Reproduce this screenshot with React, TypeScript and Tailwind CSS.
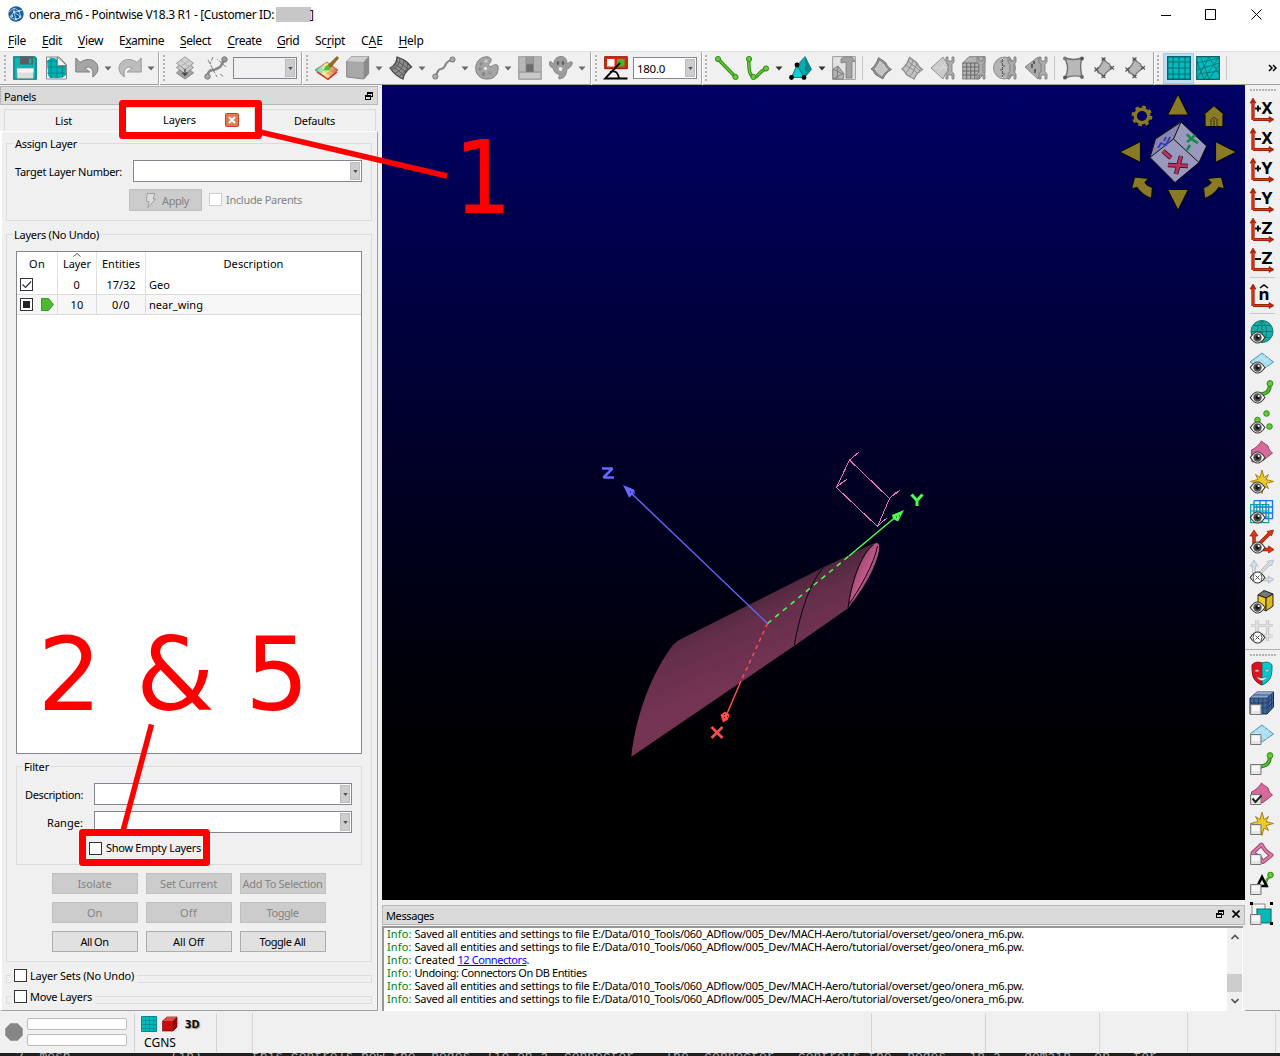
import React, { useLayoutEffect, useRef, useState } from "react";

type Kids = { children?: React.ReactNode };

/* Text that spreads its letters so that the run fills a given width. */
function Fit({ w, className = "", children }: { w: number; className?: string } & Kids) {
  const ref = useRef<HTMLSpanElement>(null);
  const [ls, setLs] = useState(0);
  useLayoutEffect(() => {
    const el = ref.current;
    if (!el) return;
    const n = (el.textContent || "").length;
    const natural = el.getBoundingClientRect().width - ls * n;
    setLs((w - natural) / n);
  }, [w]);
  return (
    <span ref={ref} className={"inline-block whitespace-pre " + className} style={{ letterSpacing: ls + "px" }}>
      {children}
    </span>
  );
}

function G({ c = "", children }: { c?: string } & Kids) {
  return (
    <svg viewBox="0 0 24 24" className={"block h-6 w-6 shrink-0 overflow-visible " + c} fill="none">
      {children}
    </svg>
  );
}

const Drop = ({ c = "ml-[5px]", fill = "#68686e" }: { c?: string; fill?: string }) => (
  <svg viewBox="0 0 8 5" className={"block h-[5px] w-2 shrink-0 " + c}>
    <path d="M0.5 0.5h7L4 4.5z" fill={fill} />
  </svg>
);

const Sep = ({ c = "" }: { c?: string }) => (
  <div className={"h-[33px] w-[2px] shrink-0 border-l border-[#a6a6a6] bg-white " + c} />
);
const Thin = ({ c = "" }: { c?: string }) => <div className={"h-6 w-px shrink-0 bg-[#c8c8c8] " + c} />;
const Grip = ({ c = "" }: { c?: string }) => (
  <div className={"flex h-[26px] w-[3px] shrink-0 flex-col justify-between " + c}>
    {Array.from({ length: 7 }, (_, i) => (
      <i key={i} className="block h-[2px] w-[2px] bg-[#b4b4b4]" />
    ))}
  </div>
);

function Combo({ c = "", children }: { c?: string } & Kids) {
  return (
    <div className={"flex h-[22px] shrink-0 items-center justify-between border border-[#828790] pr-px " + c}>
      <span className="pt-px pl-[3px]">{children}</span>
      <span className="flex h-[18px] w-[10px] items-center justify-center border border-[#bcbcbc] bg-[#cdcdcd]">
        <svg viewBox="0 0 6 4" className="h-[3px] w-[5px]">
          <path d="M0 0h6L3 4z" fill="#505050" />
        </svg>
      </span>
    </div>
  );
}

/* ---------- toolbar drawings ---------- */
const dk = "#777";

const Wrench = () => (
  <g>
    <path d="M15 1h2v4h4V1h2v5l-2 2.500v7l2 2.500v5h-2v-4h-4v4h-2v-5l2-2.500v-7L15 6z" fill="#adadad" stroke="#777" strokeWidth=".8" />
  </g>
);

const GreenDot = ({ x, y, r = 2.6 }: { x: number; y: number; r?: number }) => (
  <circle cx={x} cy={y} r={r} fill="#63cb3b" stroke="#348a16" strokeWidth="1" />
);

function Toolbar() {
  return (
    <div className="flex h-[34px] w-full shrink-0 items-center border-t border-b border-t-[#e3e3e3] border-b-[#a0a0a0] bg-[#f0f0f0]">
      <Grip c="ml-1" />
      {/* save */}
      <G c="ml-[6px]">
        <path d="M.8.8h21l1.400 1.400V23.200H.8z" fill="#08b5b7" stroke="#037b7d" strokeWidth="1.300" />
        <path d="M7 .5h13v8H7z" fill="#5d5d5d" />
        <path d="M16 2.500h2.500v5H16z" fill="#08b5b7" />
        <path d="M4 12.500h16.500v10H4z" fill="#dedede" stroke="#7fa0a0" strokeWidth=".7" />
        <path d="M4 12.500h16.500v4H4z" fill="#f8f8f8" />
      </G>
      {/* page with grid */}
      <G c="ml-2">
        <path d="M1.500 1h12.500l7.500 7.500v14.500h-20z" fill="#fff" stroke="#888" />
        <path d="M2 5Q8-1 12 4v6h9v9Q17 23 9 22Q3 23 3 18z" fill="#08b0b2" />
        <path d="M2 5h10M2 11h18M2 17h18M6 1v21M12 1v21M17.500 9v13" stroke="#037375" strokeWidth=".6" />
        <path d="M12.500 1v8.500h9z" fill="#f5f5f5" stroke="#888" />
      </G>
      <G c="ml-[6px]">
        <path d="M.8 2v14h14l-5-4c5-2.500 9 0 8 9 5-3.500 6.500-9 4-13C18.500 2.500 11 2 5 6.500z" fill="#a5a5a5" stroke="#7e7e7e" />
      </G>
      <Drop />
      <G c="ml-[6px]">
        <path d="M23.200 2v14h-14l5-4c-5-2.500-9 0-8 9C1.200 17.500-.3 12 2.200 8 5.500 2.500 13 2 19 6.500z" fill="#bdbdbd" stroke="#9a9a9a" />
      </G>
      <Drop />
      <Sep c="ml-[3px]" />
      <Grip c="ml-[3px]" />
      {/* stacked layers */}
      <G c="ml-2">
        <path d="M11 9l8.500 8L11 23l-8.500-6z" fill="#a2a2a2" stroke="#888" />
        <path d="M11 5l8.500 6.500L11 18l-8.500-6.500z" fill="#c8c8c8" stroke="#8b8b8b" />
        <path d="M11 .8l8.500 6.400L11 13.500 2.500 7.200z" fill="#d0d0d0" stroke="#9a9a9a" />
        <path d="M6.500 4l8.500 6.500M15.500 4L7 10.500" stroke="#a5a5a5" strokeWidth=".7" />
        <path d="M11 13v6m-2.500-2.500l2.500 3 2.500-3" stroke="#444" strokeWidth="1.300" />
      </G>
      <G c="ml-[6px]">
        <path d="M3 20.500C5 12 9 15 12 13c4-2 5-1 8-10" stroke="#888" strokeWidth="2.600" />
        <path d="M4 4l9 17M22 11l-9-8M9 1L6 8M16 18l4 3" stroke="#777" strokeWidth=".9" strokeDasharray="4 1.500" />
        <circle cx="3.500" cy="20.500" r="2.700" fill="#aaa" stroke={dk} />
        <circle cx="20.500" cy="3.500" r="2.700" fill="#999" stroke={dk} />
      </G>
      <Combo c="ml-[5px] w-16 bg-[#f0f0f0]" />
      <Sep c="ml-1" />
      <Grip c="ml-[3px]" />
      {/* brush */}
      <G c="ml-[6px]">
        <defs>
          <linearGradient id="rb" x1="0" x2="1">
            <stop offset="0" stopColor="#21d3de" />
            <stop offset=".45" stopColor="#f9f7a1" />
            <stop offset="1" stopColor="#e84b38" />
          </linearGradient>
        </defs>
        <path d="M0 14L12 6l11 8-10 9z" fill="url(#rb)" stroke="#b05a4a" strokeWidth=".8" />
        <path d="M2 16l11 7.500L22 16" stroke="#db2020" strokeWidth="1.300" />
        <path d="M5 12l11 7M8 9.500l11 7M5 17l11-8M9 20l11-8" stroke="#a4905a" strokeWidth=".4" />
        <path d="M9 14c0-3 2-5 4.500-5L16 11c0 3-3 4-7 3z" fill="#55bd35" />
        <path d="M13.500 9L22 .5l1.500 1.500-7.500 9z" fill="#a26a13" stroke="#65420d" strokeWidth=".7" />
      </G>
      <G c="ml-[7px]">
        <path d="M.7 5l5-4.500h17v17l-5 5.500-17-2z" fill="#a8a8a8" stroke="#858585" />
        <path d="M.7 5l5-4.500h17L17.700 6z" fill="#cfcfcf" />
        <path d="M17.700 6l5-5.500v17l-5 5.500z" fill="#8b8b8b" />
      </G>
      <Drop />
      <G c="ml-[6px]">
        <path d="M1 12C5 10 8 7 8 1c7 2 10 5 14.500 10C18 14 15 17 14 23 9 21 5 18 1 12z" fill="#8c8c8c" stroke="#444" strokeWidth="1.300" />
        <path d="M3 13.500c5-2 8-6 8-11M6.500 17c5-2 8-6 8-12.500M10.500 20c4-3 8-6 8-12M5.500 8.500c4 1 9 6 12 8M7.500 5.500c5 2 9 5 12.500 8M4 11c4 2 8 6 11 8.500" stroke="#505050" strokeWidth=".8" />
      </G>
      <Drop />
      <G c="ml-[6px]">
        <path d="M4 20C7 9 10 16 13 10c1-4 3-5 7-6" stroke="#888" strokeWidth="2.200" />
        <circle cx="3.300" cy="20.500" r="2.600" fill="#aaa" stroke={dk} />
        <circle cx="20.500" cy="3.500" r="2.600" fill="#aaa" stroke={dk} />
      </G>
      <Drop />
      <G c="ml-[6px]">
        <path d="M8 1.500C12 0 15 1 16 3c1 4-4 5-2 7 3 2 6-4 9 0 1 7-3 13-10 13C5 23.500 0 18 .8 11 1.200 6 4 3 8 1.500z" fill="#a5a5a5" stroke="#808080" />
        <circle cx="6" cy="8" r="1.700" fill="#8a8a8a" /><circle cx="5" cy="13" r="1.700" fill="#8a8a8a" />
        <circle cx="8.500" cy="18" r="1.900" fill="#888" /><circle cx="15" cy="17" r="2" fill="#999" />
        <circle cx="10.500" cy="12.500" r="1.500" fill="#eee" /><circle cx="11" cy="5" r="1.700" fill="#ccc" />
      </G>
      <Drop />
      <G c="ml-[6px]">
        <path d="M.7.7h22.600v22.600H.7z" fill="#b8b8b8" stroke="#999" />
        <path d="M8 .7h7.500v7.500H8z" fill="#9a9a9a" /><path d="M15.500 .7h7.800V16h-7.800z" fill="#b4b4b4" /><path d="M8 8h7.500v8H8z" fill="#6c6c6c" />
        <path d="M15.500 .7V16M8 .7V16h15M8 8h7.500M.7 16H8" stroke="#888" strokeWidth=".8" />
        <path d="M2 17h20v5H2z" fill="#c9c9c9" />
      </G>
      {/* ghost */}
      <G c="ml-[7px]">
        <path d="M5 8c0-5 3-7.500 7-7.500S18 3 18 8c2-1 3-3 5-2 1 3-2 6-5 7-1 5-1 9-8 10-1-1 1-3 0-5-4 0-5-3-6-6-3-1-4-3-3.500-6C2 4.500 3 7 5 8z" fill="#9c9c9c" stroke="#888" />
        <ellipse cx="9" cy="7" rx="1.300" ry="2" fill="#5e5e5e" /><ellipse cx="14" cy="7" rx="1.300" ry="2" fill="#5e5e5e" />
        <circle cx="11.500" cy="13" r="2" fill="#eee" />
      </G>
      <Drop />
      <Sep c="ml-[4px]" />
      <Grip c="ml-[3px]" />
      <G c="ml-[6px]">
        <path d="M.7.7h22.600v12H.7z" fill="#d62c0d" stroke="#8e1703" />
        <path d="M3 3h7.500v7.500H3z" fill="#fff" /><path d="M13 3h7.500v7.500H13z" fill="#43b72c" />
        <path d="M16 7L1 22.500h22.500M6 16c6-2 8 1 9 6" stroke="#000" strokeWidth="1.800" />
      </G>
      <Combo c="ml-[5px] w-16 bg-white text-[11.5px] leading-[18px]">
        <Fit w={28}>180.0</Fit>
      </Combo>
      <Sep c="ml-1" />
      <Grip c="ml-[2px]" />
      <G c="ml-[7px]">
        <path d="M3 3l17.500 18" stroke="#348a16" strokeWidth="3.500" /><path d="M3 3l17.500 18" stroke="#5cc835" strokeWidth="1.600" />
        <GreenDot x={3} y={3} /><GreenDot x={20.500} y={21} />
      </G>
      <G c="ml-[7px]">
        <path d="M3 3c-1 16 3 18 6 18s5-7 11-8" stroke="#348a16" strokeWidth="3.500" /><path d="M3 3c-1 16 3 18 6 18s5-7 11-8" stroke="#5cc835" strokeWidth="1.600" />
        <GreenDot x={3} y={3} /><GreenDot x={20} y={12.500} /><GreenDot x={7.500} y={21} />
      </G>
      <Drop fill="#303035" />
      <G c="ml-[6px]">
        <path d="M16 .5L8 9.500 3 21h13l6.500-7.500z" fill="#07aaad" stroke="#037375" strokeWidth=".7" />
        <path d="M16 .5l6.500 13L16 21z" fill="#03898c" />
        <path d="M8 9L2.500 21.500H15z" fill="#0bd0d3" stroke="#036f70" strokeWidth=".8" />
        <circle cx="8" cy="9" r="2.400" fill="#000" /><circle cx="2.500" cy="21.500" r="2.400" fill="#000" /><circle cx="15" cy="21.500" r="2.400" fill="#000" />
      </G>
      <Drop fill="#303035" />
      <G c="ml-[6px]">
        <path d="M.6.6h22.800v22.800H.6z" fill="#e2e2e2" stroke="#9c9c9c" />
        <path d="M1 23V13l5-3 6 8-1 5zM1 13l10 5M6 10l-1 13M1 23l11-6" stroke="#7e7e7e" fill="#b5b5b5" />
        <path d="M9 3l3-2h8l3 4-1 1-2-1.500V22h-6V6l-5 1z" fill="#a2a2a2" stroke="#7a7a7a" strokeWidth=".8" />
      </G>
      <Thin c="ml-[6px]" />
      <G c="ml-[6px]">
        <path d="M2 13C6 10 8 6 9.500 1.500 13 4 15 5 17 7c1 3 3 5 5.500 6.500-5 3-7 6-8.500 9.500-3-2-6-3-8-5C5 16 4 14.500 2 13z" fill="#8c8c8c" stroke="#777" />
        <path d="M6 13C8 11 9.500 8.500 10.800 5.500 13 7 14 7.500 15 9c1 2 2 3 3.500 4.500-3 2-4 3.500-5.500 6-2-1-3.500-2-4.500-3.500C8 15 7 14 6 13z" fill="#c2c2c2" stroke="#ddd" />
      </G>
      <G c="ml-[7px]">
        <path d="M2 13C6 10 8 6 9.500 1.500 13 4 15 5 17 7c1 3 3 5 5.500 6.500-5 3-7 6-8.500 9.500-3-2-6-3-8-5C5 16 4 14.500 2 13z" fill="#c2c2c2" stroke="#8c8c8c" strokeWidth="1.300" />
        <path d="M5.500 17C9 14 11.500 9 13 4.500M10 20C13 17 15 12 17 7.500M5.500 8.500C8 12 14 13 17.500 17.500M8 5c3 4 8 5 12 10" stroke="#8a8a8a" />
      </G>
      <G c="ml-[7px]">
        <path d="M0 12L12 1l6 10-6 12z" fill="#cacaca" stroke="#919191" />
        <path d="M3 11.500c5 1 8 0 14 0M8 5c3 4 7 7 8 10M6 17c4-3 7-8 9-12" stroke="#ddd" /><Wrench />
      </G>
      <G c="ml-[7px]">
        <path d="M.7 7L7 .7h16v16L17 23H.7z" fill="#b4b4b4" stroke="#808080" />
        <path d="M.7 7H17v16M4.700 7v16M8.700 7v16M12.700 7v16M.7 11H17M.7 15H17M.7 19H17" stroke="#666" /><Wrench />
      </G>
      <G c="ml-[7px]">
        <circle cx="11.500" cy="12" r="11" fill="#b4b4b4" stroke="#909090" />
        <path d="M9.500 2v20" stroke="#eee" strokeWidth="1" /><path d="M9.500 3v18M7.500 6h2m0 4h2.500M7 14h2.500m0 4H12" stroke="#555" strokeDasharray="3 1" /><Wrench />
      </G>
      <G c="ml-[7px]">
        <path d="M1 11L14 1l4 11-4 11z" fill="#a8a8a8" stroke="#888" />
        <path d="M8 8v4m3 1v4M10 5v3" stroke="#444" strokeWidth="1.500" /><Wrench />
      </G>
      <Thin c="ml-[6px]" />
      <G c="ml-[7px]">
        <path d="M3 2c7 2 10 2 17 0-3 8-1 12 0 19-6-2-10-2-17 1 4-8 3-12 0-20z" fill="#b8b8b8" stroke="#707070" strokeWidth="1.400" />
        <circle cx="3" cy="2.500" r="1.900" fill="#777" /><circle cx="20" cy="2.500" r="1.900" fill="#555" /><circle cx="3" cy="21.500" r="1.900" fill="#555" /><circle cx="20" cy="21" r="1.900" fill="#666" />
      </G>
      {[0, 1].map((k) => (
        <G key={k} c="ml-[7px]">
          <path d="M10.500 3C12 6 15 7 16.500 8c0 2 1 3 2.500 4-4 3-7 5-8.500 8.500C9 18 7 17 5 16.500 5 15 4 14 3.500 13.500 7 11 9 8 10.500 3z" fill="#b8b8b8" stroke="#777" strokeWidth="1.300" />
          <path d="M8.500 1.500l4 3M12.500 1.500l-4 3M17 10l4 3.500M21 10l-4 3.500M1.500 11.500l4 4M5.500 11.500l-4 4M8.500 19l4 3M12.500 19l-4 3" stroke="#555" strokeWidth="1.100" />
        </G>
      ))}
      <Sep c="ml-[5px]" />
      <Grip c="ml-[2px]" />
      <div className="ml-[3px] flex h-[31px] w-[31px] shrink-0 items-center justify-center border border-[#99cbf3] bg-[#c2dcf3]">
        <G>
          <path d="M.7.7h22.600v22.600H.7z" fill="#05babd" stroke="#026668" strokeWidth="1.400" />
          <path d="M6 1v22M12 1v22M18 1v22M1 6h22M1 12h22M1 18h22" stroke="#036c6e" />
        </G>
      </div>
      <G c="ml-[2px]">
        <path d="M.7.7h22.600v22.600H.7z" fill="#05babd" stroke="#026668" strokeWidth="1.200" />
        <path d="M1 7l22-5M1 6l7 17M1 14l22-7M1 23L13 1l10 17M3 18l20-3M8 23L23 1M13 23L5 1M13 23L23 9" stroke="#036c6e" strokeWidth=".8" />
      </G>
      <Thin c="ml-[6px]" />
      <svg viewBox="0 0 9 8" className="ml-[41px] h-2 w-[9px] shrink-0">
        <path d="M1 1l3 3-3 3M5 1l3 3-3 3" fill="none" stroke="#000" strokeWidth="1.500" />
      </svg>
    </div>
  );
}

/* ---------- right side drawings ---------- */
function AxisIcon({ sign, t, hat }: { sign: string; t: string; hat?: boolean }) {
  return (
    <G>
      <path d="M3 22V5M3 21.500h17" stroke="#8d1b05" strokeWidth="3.200" />
      <path d="M3 0L6 5H0zM24 21.500L19 18.500v6z" fill="#b52208" stroke="#8d1b05" strokeWidth=".6" />
      <path d="M3 22V4M3 21.500h17" stroke="#ee350e" strokeWidth="1.500" />
      {sign && <path d={sign === "+" ? "M5 10.500h6M8 7.500v6" : "M5 11h6"} stroke="#111" strokeWidth="2" />}
      <text x={hat ? 8.5 : 11.5} y="16" fontSize="16.500" fontWeight="700" fontFamily="Noto Sans, sans-serif" fill="#000" textLength={hat ? 11 : 11} lengthAdjust="spacingAndGlyphs">{t}</text>
      {hat && <path d="M10 4l4-3 4 3" stroke="#000" strokeWidth="1.500" />}
    </G>
  );
}

const Eye = ({ off }: { off?: boolean }) => (
  <g>
    <path d="M.3 17.500Q7.500 6.500 14.900 17.500Q7.500 28.500 .3 17.500z" fill="#fff" stroke="#333" strokeWidth="1.100" />
    {off ? (
      <path d="M5.500 15.500l4 4M9.500 15.500l-4 4M4 14q-2 3.500 0 7M11 14q2 3.500 0 7" stroke="#555" />
    ) : (
      <g><circle cx="7.500" cy="17.500" r="4.200" fill="#505050" /><circle cx="7.500" cy="17.500" r="2" fill="#151515" /><circle cx="8.700" cy="16" r="1.100" fill="#fff" /></g>
    )}
  </g>
);
const Box = ({ on }: { on?: boolean }) => (
  <g>
    <path d="M.6 12.500h10.400v10H.6z" fill="#e4e4e4" stroke="#777" />
    <path d="M2 14h7.500v5H2z" fill="#fff" opacity=".7" />
    {on && <path d="M2.500 16.500l3 3.500 6-6.500" stroke="#222" strokeWidth="2" />}
  </g>
);

const Sheet = () => (
  <g><path d="M0 12L12 3l11.500 9L12 20z" fill="#a9dcf0" stroke="#5393ae" /><path d="M5 9l12 8M9 6l11 8M7 16L19 8M3 13.500L15 5" stroke="#c9ecf8" strokeWidth=".8" /></g>
);
const Tail = () => (
  <g><path d="M2 20C9 10 19 19 20 4" stroke="#2d8013" strokeWidth="4" /><path d="M2 20C9 10 19 19 20 4" stroke="#58b63a" strokeWidth="2" /><GreenDot x={20} y={3.500} r={2.900} /></g>
);
const Petal = () => <path d="M1.500 10C6 8 9 5 11.500 1c2.500 2.500 5 3.500 6.500 5 .5 3 2 5.500 4.500 7L13 20.500 2 22z" fill="#d7699b" stroke="#974269" />;
const Star = () => (
  <path d="M12 0l2 7.500 4.500-3-2.500 5 7.500 2-7.500 2 2.500 5-4.500-2.500L12 23.500l-2-7.500-4.500 2.500 2.500-5-7.500-2 7.500-2-2.500-5 4.500 3z" fill="#edca2c" stroke="#9d7b0b" strokeWidth=".9" />
);
const Tri = ({ f, s }: { f: string; s: string }) => (
  <g><path d="M4 20V4M4 19L20 3M4 19.500h16" stroke={s} strokeWidth="3.400" /><path d="M4 0l4 6H0zM23.500 0l-2 6-4.500-4.500zM24 19.500L18.500 16v7z" fill={f} stroke={s} strokeWidth=".7" /><path d="M4 18V5M4 19L20 3M5 19.500h15" stroke={f} strokeWidth="2" /></g>
);

const SideGrip = () => (
  <div className="mt-1 flex h-[2px] w-[26px] shrink-0 justify-between">
    {Array.from({ length: 9 }, (_, i) => <i key={i} className="h-[2px] w-[2px] bg-[#b4b4b4]" />)}
  </div>
);

function SideBar() {
  return (
    <div className="flex w-[35px] shrink-0 flex-col items-start border-b border-[#a0a0a0] bg-[#f0f0f0] pl-[5px]">
      <SideGrip />
      <div className="mt-[7px] flex flex-col gap-[6px]">
        <AxisIcon sign="+" t="X" /><AxisIcon sign="-" t="X" /><AxisIcon sign="+" t="Y" />
        <AxisIcon sign="-" t="Y" /><AxisIcon sign="+" t="Z" /><AxisIcon sign="-" t="Z" />
      </div>
      <div className="mt-[5px] h-px w-[25px] shrink-0 bg-[#c8c8c8]" />
      <div className="mt-[6px]"><AxisIcon sign="" t="n" hat /></div>
      <div className="mt-[5px] h-px w-[25px] shrink-0 bg-[#c8c8c8]" />
      <div className="mt-[6px] flex flex-col gap-[6px]">
        <G>
          <circle cx="12" cy="11.500" r="11" fill="#18afa8" stroke="#09756f" />
          <path d="M12 .5v22M1 11.500h22M3 5.500h18M3 17.500h18M12 .5Q2 11 12 22M12 .5Q22 11 12 22" stroke="#087770" strokeWidth=".9" /><Eye />
        </G>
        <G><Sheet /><Eye /></G>
        <G><Tail /><Eye /></G>
        <G><GreenDot x={16.500} y={3.500} r={2.800} /><GreenDot x={7.500} y={10} r={2.800} /><GreenDot x={19.500} y={16.500} r={2.800} /><Eye /></G>
        <G><Petal /><Eye /></G>
        <G><Star /><Eye /></G>
        <G>
          <path d="M4 .7h18.500v18M4 .7v18h18.500M10 1v18M16 1v18M4 7h18M4 13h18" stroke="#1572ff" strokeWidth="1.300" />
          <path d="M.7 4.700h18v18h-18zM6.700 5v17M12.700 5v17M1 11h18M1 17h18" stroke="#08a19c" strokeWidth="1.200" /><Eye />
        </G>
        <G><Tri f="#e3330e" s="#8a1805" /><Eye /></G>
        <G><Tri f="#d5dde6" s="#a9b4bf" /><Eye off /></G>
        <G>
          <path d="M8 5l6-4.500L23 4l-7 4z" fill="#777" stroke="#222" /><path d="M8 5l8 3v13l-8-4z" fill="#f4ce27" stroke="#222" /><path d="M16 8l7-4v12l-7 5z" fill="#ddb71b" stroke="#222" /><Eye />
        </G>
        <G><path d="M7 0v21M17.500 0v21M1 5.500h22M1 16h22" stroke="#bababa" strokeWidth="3.200" /><path d="M7 0v21M17.500 0v21M1 5.500h22M1 16h22" stroke="#e2e2e2" strokeWidth="1.800" /><Eye off /></G>
      </div>
      <div className="mt-[5px] -ml-[5px] h-px w-[35px] shrink-0 bg-[#b0b0b0]" />
      <SideGrip />
      <div className="mt-[6px] flex flex-col gap-[6px]">
        <G>
          <path d="M12 1C7-1 3 1 2 3c0 9 0 16 10 20z" fill="#e1101f" stroke="#7b1018" /><path d="M12 1c5-2 9 0 10 2 0 9 0 16-10 20z" fill="#08c7cb" stroke="#077" />
          <path d="M4.500 9q2.500-2.500 5 0-2.500 1.500-5 0zM14.500 9q2.500-2.500 5 0-2.500 1.500-5 0zM6.500 14.500q5.500 3.500 11 0-2 4-5.500 4t-5.500-4z" fill="#fff" stroke="#444" strokeWidth=".4" />
        </G>
        <G>
          <path d="M0 6L7 0h16.500v15L17 22H0z" fill="#41669a" stroke="#1b2c4a" /><path d="M0 6L7 0h16.500L17 6z" fill="#8aa6cc" />
          <path d="M17 6v16M0 6h17l6.500-6M4 6v16M8.500 6v16M13 6v16M0 11h17l6.500-6M0 16h17l6.500-6M19 4v15M21.500 2v15M3.500 3H20" stroke="#1c3459" strokeWidth=".7" /><Box />
        </G>
        <G><Sheet /><Box /></G>
        <G><Tail /><Box /></G>
        <G><Petal /><Box on /></G>
        <G><Star /><Box /></G>
        <G><path d="M2.500 11L11.500 2.500c2 4 5 8 10 10.500L13 20 9 14.500z" stroke="#94486c" strokeWidth="4" strokeLinejoin="round" /><path d="M2.500 11L11.500 2.500c2 4 5 8 10 10.500L13 20 9 14.500z" stroke="#e07bab" strokeWidth="2" strokeLinejoin="round" /><Box /></G>
        <G><path d="M17 15Q14 8 20 5" stroke="#4aa52c" strokeWidth="2.500" /><path d="M12 5L7.500 14h9z" stroke="#000" strokeWidth="2.600" /><GreenDot x={20.500} y={3} r={2.800} /><Box /></G>
        <G>
          <path d="M2 2h13v14H2z" fill="#f7f7f7" stroke="#888" /><path d="M7 7h14v14H7z" fill="#08b8b7" stroke="#037775" strokeWidth="1.200" />
          <path d="M0 0h3v3H0zM20 0h3v3h-3zM20 20h3v3h-3z" fill="#000" /><Box />
        </G>
      </div>
    </div>
  );
}

/* ---------- 3D view ---------- */
function Scene() {
  const gold = "#8b7a24";
  return (
    <div className="h-[815px] w-[863px] bg-gradient-to-b from-[#000066] to-black">
      <svg viewBox="382 85 863 815" className="block h-full w-full" fill="none">
        <defs>
          <linearGradient id="wing" gradientUnits="userSpaceOnUse" x1="745" y1="595" x2="775" y2="665">
            <stop offset="0" stopColor="#4a2639" /><stop offset=".35" stopColor="#642e4a" /><stop offset="1" stopColor="#753454" />
          </linearGradient>
          <linearGradient id="tip" gradientUnits="userSpaceOnUse" x1="858" y1="570" x2="874" y2="578">
            <stop offset="0" stopColor="#a94c78" /><stop offset=".5" stopColor="#c05a8b" /><stop offset="1" stopColor="#6e3450" />
          </linearGradient>
        </defs>
        <path d="M631.300 756.700C635 722 648 680 670 649Q674 643 679 640L823 567.500 868 546Q877 541 879 545.500C879 558 872 574 862 589Q855 600 848.500 608L794 646z" fill="url(#wing)" />
        <path d="M849 605C852 583 861 554 875 543.500Q880 541 879 550C877 562 866 587 849 605z" fill="url(#tip)" />
        <path d="M848 608C851 583 861 554 873 545M849 604C858 592 875 562 877.500 546M794.300 645C799 619 808 585 823 568" stroke="#08060a" strokeWidth="1" />
        <path d="M767.500 623.500L629 491" stroke="#6767ff" strokeWidth="1.400" />
        <path d="M767.500 623.500L849 556" stroke="#4cff4c" strokeWidth="1.500" strokeDasharray="5 5" />
        <path d="M849 556l49-41" stroke="#4cff4c" strokeWidth="1.500" />
        <path d="M767.500 623.500L741 681" stroke="#ff4c4c" strokeWidth="1.500" strokeDasharray="4 4" />
        <path d="M741 681l-15 35" stroke="#ff4c4c" strokeWidth="1.500" />
        <path d="M849.500 460l40 38.500-12 28-41-39zM849.500 460l9-7.500M854 456l5-4M836.500 487l9-7M842 483l5-4M889.500 498.500l9-8M894 495l6-5M877.500 526l8-7M882 522l5-4" stroke="#f175b5" strokeWidth="1" shapeRendering="crispEdges" />
        <path d="M623 485l11 4.500 1 4-6 4z" fill="#6767ff" /><path d="M904 510l-12 5 1 4 5 2.500z" fill="#4cff4c" /><path d="M720.500 715l4.500-3.500 4.500 3-1.500 5-5 3z" fill="#ff4c4c" />
        <path d="M630 492h1m2 1h1m-3 3h1" stroke="#00002b" /><path d="M896 517h1m2-1h1" stroke="#002b00" /><path d="M724 714.500h1m2 2h1m-4 1h1" stroke="#400" />
        <path d="M602 468.500h10.500L603.500 477.500H614" stroke="#6767ff" strokeWidth="2.600" strokeLinejoin="bevel" />
        <path d="M911.500 494.500l5.500 6 5.500-6M917 500v6" stroke="#4cff4c" strokeWidth="3" />
        <path d="M711.500 727l11 11M722.500 727l-11 11" stroke="#ff4c4c" strokeWidth="2.500" />

        {/* view navigation */}
        <g fill={gold} stroke="#05051c" strokeWidth="1.200">
          <path d="M1178 94l10.500 21h-21z" /><path d="M1178 210.500l10.500-21h-21z" /><path d="M1119.500 152l21-10.500v21z" /><path d="M1236.500 152l-21-10.500v21z" />
          <path d="M1214 105.500l11 9.500h-2v11.500h-18V115h-2z" />
          <path d="M1131.500 189l3-12 14.500 1.500-4 4q3 4 7.500 5l-1 11q-9-3-14.500-11z" />
          <path d="M1224.500 189l-3-12-14.500 1.500 4 4q-3 4-7.500 5l1 11q9-3 14.500-11z" />
        </g>
        <path d="M1211 126v-6.500q3-4 6 0v6.500M1214 119v7" stroke="#3a3210" strokeWidth="1" />
        <circle cx="1142" cy="116" r="6.800" stroke={gold} strokeWidth="3.400" />
        <circle cx="1142" cy="116" r="9.200" stroke={gold} strokeWidth="2.400" strokeDasharray="3.600 3.630" />
        <path d="M1181 122l25.500 24-7.500 16.500-24 20-25-25 5.500-18.500z" fill="#9999bd" stroke="#111" />
        <path d="M1181 122l-7.500 17-23.500 18.500 5.500-18.500z" fill="#8585ae" stroke="#111" />
        <path d="M1173.500 139l25.500 23.500" stroke="#111" />
        <path d="M1158 148l3-5 5 2 4-8M1166 137l-2 4" stroke="#3338c8" strokeWidth="1.800" />
        <path d="M1187 134l4 5 7 4M1195 135l-4 4-4 3M1190 145l-3 5" stroke="#148a4b" strokeWidth="2.600" />
        <path d="M1163 151l8 7M1168 165l20 1M1181 156l-5 18" stroke="#171024" strokeWidth="4.500" />
        <path d="M1163 151l8 7M1168 165l20 1M1181 156l-5 18" stroke="#bb315a" strokeWidth="3" />
      </svg>
    </div>
  );
}

/* ---------- left panel ---------- */
const Check = ({ c = "border-[#333]", children }: { c?: string } & Kids) => (
  <span className={"flex h-[13px] w-[13px] shrink-0 items-center justify-center border bg-white " + c}>{children}</span>
);

function Btn({ w, off, children }: { w: number; off?: boolean } & Kids) {
  return (
    <div className={"flex h-[21px] w-[86px] items-center justify-center border pr-px " + (off ? "border-[#bfbfbf] bg-[#cccccc] text-[#838383]" : "border-[#adadad] bg-[#e1e1e1]")}>
      <Fit w={w}>{children}</Fit>
    </div>
  );
}

const Restore = () => (
  <svg viewBox="0 0 8 8" className="h-2 w-2" fill="none" stroke="#000" shapeRendering="crispEdges">
    <path d="M2.500 3V.5h5v4H5.500M2.500 1h5M.5 3.500h5v4h-5zM.5 4h5" />
  </svg>
);

const Legend = ({ w, c = "", children }: { w: number; c?: string } & Kids) => (
  <div className={"-mt-[8px] h-4 w-fit bg-[#f0f0f0] px-[2px] leading-4 " + c}><Fit w={w}>{children}</Fit></div>
);

function Panel() {
  const cell = "flex items-center justify-center";
  return (
    <div className="flex w-[378px] shrink-0 flex-col text-[11px] leading-[14px]">
      <div className="mt-px flex h-[19px] shrink-0 items-center justify-between border border-[#b8b8b8] bg-[#dadada] pt-[3px] pr-1 pl-[3px]">
        <Fit w={32}>Panels</Fit>
        <div className="-mt-[3px]"><Restore /></div>
      </div>
      <div className="flex h-[26px] shrink-0 items-end pl-1">
        <div className="flex h-[22px] w-[116px] items-center justify-center border border-b-0 border-[#dadada] pt-px pl-[3px]"><Fit w={17}>List</Fit></div>
        <div className="flex h-6 w-[135px] items-center border border-b-0 border-[#dadada] bg-white pl-[42px]">
          <Fit w={33}>Layers</Fit>
          <span className="ml-[29px] flex h-[14px] w-[14px] items-center justify-center rounded-[2px] border border-[#c6422b] bg-[#e07b50]">
            <svg viewBox="0 0 8 8" className="h-2 w-2"><path d="M1 1l6 6M7 1L1 7" stroke="#fff" strokeWidth="2.200" /></svg>
          </span>
        </div>
        <div className="flex h-[22px] w-[121px] items-center justify-center border border-b-0 border-l-0 border-[#dadada] pt-px pr-[1px]"><Fit w={41}>Defaults</Fit></div>
      </div>
      <div className="flex flex-1 flex-col border-t border-r border-b border-l-2 border-t-white border-r-[#a0a0a0] border-b-[#a0a0a0] border-l-white pr-[5px] pl-1">
        <div className="mt-[11px] h-[78px] shrink-0 border border-[#dcdcdc]">
          <Legend w={62} c="ml-[6px]">Assign Layer</Legend>
          <div className="mt-2 flex items-center pl-2">
            <Fit w={107} className="pt-[2px]">Target Layer Number:</Fit>
            <Combo c="ml-[11px] w-[229px] bg-white" />
          </div>
          <div className="mt-[7px] flex items-center pl-[122px] text-[#838383]">
            <div className="flex h-[22px] w-[73px] items-center border border-[#bfbfbf] bg-[#ccc] pl-4">
              <svg viewBox="0 0 10 15" className="h-[15px] w-[10px]"><path d="M1 .5h8L7 6h2.500L2 14.500l1-6H.5z" fill="#ddd" stroke="#a0a0a0" /></svg>
              <Fit w={27} className="ml-[6px] pt-px">Apply</Fit>
            </div>
            <Check c="-mt-px ml-[7px] border-[#ccc]" />
            <Fit w={76} className="ml-[4px]">Include Parents</Fit>
          </div>
        </div>

        <div className="mt-[13px] h-[728px] shrink-0 border border-[#dcdcdc]">
          <Legend w={85} c="ml-[5px]">Layers (No Undo)</Legend>
          <div className="ml-[9px] mt-[8px] h-[503px] w-[346px] border border-[#828790] bg-white">
            <div className="grid h-[22px] grid-cols-[41px_39px_49px_1fr] divide-x divide-[#e5e5e5]">
              <div className={cell + " pt-[2px]"}><Fit w={16}>On</Fit></div>
              <div className={cell + " relative pt-[2px]"}>
                <svg viewBox="0 0 8 4" className="absolute top-px left-[15px] h-1 w-2"><path d="M.5 3.500L4 .5l3.500 3" fill="none" stroke="#555" /></svg>
                <Fit w={28}>Layer</Fit>
              </div>
              <div className={cell + " pt-[2px]"}><Fit w={38}>Entities</Fit></div>
              <div className={cell + " pt-[2px]"}><Fit w={60}>Description</Fit></div>
            </div>
            <div className="grid h-[21px] grid-cols-[41px_39px_49px_1fr] divide-x divide-[#dcdcdc] border-b border-[#dcdcdc]">
              <div className="flex items-center pl-[3px]">
                <Check><svg viewBox="0 0 11 11" className="h-[11px] w-[11px]"><path d="M1.500 5.500l3 3 5.500-6" fill="none" stroke="#333" strokeWidth="1.200" /></svg></Check>
              </div>
              <div className={cell + " pt-px"}><Fit w={7}>0</Fit></div>
              <div className={cell + " pt-px"}><Fit w={29}>17/32</Fit></div>
              <div className="flex items-center pt-px pl-[3px]"><Fit w={21}>Geo</Fit></div>
            </div>
            <div className="grid h-5 grid-cols-[41px_39px_49px_1fr] divide-x divide-[#dcdcdc] border-b border-[#dcdcdc] bg-[#f7f7f7]">
              <div className="flex items-center pl-[3px]">
                <Check><i className="h-[7px] w-[7px] bg-[#222]" /></Check>
                <svg viewBox="0 0 13 13" className="ml-2 h-[13px] w-[13px]"><path d="M.5.5h7l5 6-5 6h-7z" fill="#4fb832" stroke="#3a9a22" /></svg>
              </div>
              <div className={cell}><Fit w={13}>10</Fit></div>
              <div className={cell}><Fit w={18}>0/0</Fit></div>
              <div className="flex items-center pl-[3px]"><Fit w={54}>near_wing</Fit></div>
            </div>
          </div>
          <div className="ml-[9px] mt-3 h-[99px] w-[346px] border border-[#dcdcdc]">
            <Legend w={25} c="ml-[5px]">Filter</Legend>
            <div className="mt-[8px] flex items-center">
              <div className="flex w-[66px] justify-end pt-[2px]"><Fit w={58}>Description:</Fit></div>
              <Combo c="ml-[11px] w-[258px] bg-white" />
            </div>
            <div className="mt-[6px] flex items-center">
              <div className="flex w-[66px] justify-end pt-[2px]"><Fit w={36}>Range:</Fit></div>
              <Combo c="ml-[11px] w-[258px] bg-white" />
            </div>
            <div className="mt-2 flex items-center pl-[72px]"><Check /><Fit w={95} className="ml-1">Show Empty Layers</Fit></div>
          </div>
          <div className="mt-2 ml-[45px] grid w-fit grid-cols-3 gap-x-2 gap-y-2">
            <Btn off w={34}>Isolate</Btn><Btn off w={57}>Set Current</Btn><Btn off w={80}>Add To Selection</Btn>
            <Btn off w={15}>On</Btn><Btn off w={17}>Off</Btn><Btn off w={32}>Toggle</Btn>
            <Btn w={28}>All On</Btn><Btn w={31}>All Off</Btn><Btn w={46}>Toggle All</Btn>
          </div>
        </div>

        <div className="mt-[13px] h-2 shrink-0 border border-[#dcdcdc]">
          <div className="-mt-[8px] ml-1 flex w-fit items-center bg-[#f0f0f0] px-[3px]"><Check /><Fit w={104} className="ml-[3px] pt-px">Layer Sets (No Undo)</Fit></div>
        </div>
        <div className="mt-[13px] h-2 shrink-0 border border-[#dcdcdc]">
          <div className="-mt-[8px] ml-1 flex w-fit items-center bg-[#f0f0f0] px-[3px]"><Check /><Fit w={62} className="ml-[3px] pt-px">Move Layers</Fit></div>
        </div>
      </div>
    </div>
  );
}

const Info = ({ children }: Kids) => <div className="h-[13px] whitespace-pre leading-[13px]"><Fit w={27.5} className="text-[#008000]">Info: </Fit>{children}</div>;
const SAVED = "Saved all entities and settings to file E:/Data/010_Tools/060_ADflow/005_Dev/MACH-Aero/tutorial/overset/geo/onera_m6.pw.";

function Messages() {
  return (
    <div className="flex flex-1 flex-col pt-[5px] text-[11px]">
      <div className="flex h-5 w-[863px] shrink-0 items-center justify-between border border-[#b8b8b8] bg-[#dadada] pr-1 pl-[3px]">
        <Fit w={48} className="pt-[2px]">Messages</Fit>
        <div className="-mt-[2px] flex items-center gap-2">
          <Restore />
          <svg viewBox="0 0 8 8" className="h-2 w-2"><path d="M.5.5l7 7M7.500.5l-7 7" stroke="#000" strokeWidth="1.600" /></svg>
        </div>
      </div>
      <div className="mt-px flex w-[861px] flex-1 border-t-2 border-l-2 border-[#999] bg-white">
        <div className="-mt-px flex-1 pl-[3px]">
          <Info><Fit w={609.5}>{SAVED}</Fit></Info>
          <Info><Fit w={609.5}>{SAVED}</Fit></Info>
          <Info><Fit w={43}>{"Created "}</Fit><Fit w={69} className="text-[#0000ff] underline">12 Connectors</Fit>.</Info>
          <Info><Fit w={172}>Undoing: Connectors On DB Entities</Fit></Info>
          <Info><Fit w={609.5}>{SAVED}</Fit></Info>
          <Info><Fit w={609.5}>{SAVED}</Fit></Info>
        </div>
        <div className="mr-px flex w-[15px] flex-col items-center bg-[#f0f0f0]">
          <svg viewBox="0 0 8 6" className="mt-[6px] h-[6px] w-2"><path d="M.5 5L4 1.500 7.500 5" fill="none" stroke="#555" strokeWidth="1.700" /></svg>
          <div className="mt-[34px] h-[18px] w-full bg-[#cdcdcd]" />
          <svg viewBox="0 0 8 6" className="mt-[6px] h-[6px] w-2"><path d="M.5 1L4 4.500 7.500 1" fill="none" stroke="#555" strokeWidth="1.700" /></svg>
        </div>
      </div>
    </div>
  );
}

const V = ({ c }: { c: string }) => <div className={"h-[39px] w-px shrink-0 bg-[#d4d4d4] " + c} />;

function Status() {
  return (
    <div className="flex h-[42px] shrink-0 items-center bg-[#f0f0f0]">
      <svg viewBox="0 0 18 18" className="ml-[5px] h-[18px] w-[18px]"><path d="M5.500.5h7l5 5v7l-5 5h-7l-5-5v-7z" fill="#858585" stroke="#9f9f9f" /></svg>
      <div className="ml-1 flex flex-col gap-1">
        <div className="h-3 w-[100px] rounded-[2px] border border-[#bbb] bg-white" />
        <div className="h-3 w-[100px] rounded-[2px] border border-[#bbb] bg-white" />
      </div>
      <V c="ml-[7px]" />
      <div className="ml-[6px] w-[75px] pt-[2px]">
        <div className="flex h-4 items-center">
          <svg viewBox="0 0 16 16" className="h-4 w-4"><path d="M.5.500h15v15H.5z" fill="#05babd" stroke="#05888a" /><path d="M4.500 0v16M8.500 0v16M12.500 0v16M0 4.500h16M0 8.500h16M0 12.500h16" stroke="#03888a" strokeWidth=".8" /></svg>
          <svg viewBox="0 0 16 16" className="ml-[5px] h-4 w-4"><path d="M.5 5L5 1h10v10l-4 4H.5z" fill="#c60d0d" stroke="#7d0808" strokeWidth=".7" /><path d="M.5 5L5 1h10l-4 4z" fill="#e04b4b" /><path d="M11 5l4-4v10l-4 4z" fill="#8a0505" /></svg>
          <span className="ml-[7px] text-[11px] leading-4 font-bold [text-shadow:1px_1px_1px_#888]"><Fit w={15}>3D</Fit></span>
        </div>
        <div className="mt-[3px] pl-[3px] text-[12px] leading-4"><Fit w={32}>CGNS</Fit></div>
      </div>
      <V c="" />
      <V c="ml-[35px]" />
      <V c="ml-[618px]" />
      <V c="ml-[113px]" />
      <V c="ml-[113px]" />
      <V c="ml-[87px]" />
      <V c="ml-[87px]" />
    </div>
  );
}

const MENU: [string, string, string, number, number][] = [
  ["", "F", "ile", 18, 16], ["", "E", "dit", 20, 16], ["", "V", "iew", 25, 16], ["E", "x", "amine", 45, 16], ["", "S", "elect", 31, 16.5],
  ["", "C", "reate", 34, 15.5], ["", "G", "rid", 22, 16], ["Sc", "r", "ipt", 30, 16], ["C", "A", "E", 22, 15.5], ["", "H", "elp", 25, 0],
];

function Notes() {
  return (
    <svg viewBox="0 0 1280 1056" className="pointer-events-none absolute inset-0 h-[1056px] w-[1280px]" fill="none" stroke="#f00">
      <rect x="122.500" y="103.500" width="136" height="32" strokeWidth="7" strokeLinejoin="round" />
      <path d="M260 132L447 176" strokeWidth="5.500" />
      <rect x="82.500" y="832.500" width="124" height="30" strokeWidth="7" strokeLinejoin="round" />
      <path d="M151.500 724.500L123 831" strokeWidth="5.500" />
      <g fill="#f00" stroke="none" fontFamily="DejaVu Sans, Verdana, sans-serif" fontSize="101">
        <text x="454" y="213" textLength="58" lengthAdjust="spacingAndGlyphs">1</text>
        <text x="37.500" y="709.500">2</text><text x="136" y="709.500">&amp;</text><text x="245" y="709.500">5</text>
      </g>
    </svg>
  );
}

export default function App() {
  return (
    <div className="relative flex h-[1056px] w-[1280px] flex-col overflow-hidden bg-[#f0f0f0] font-['Noto_Sans','Open_Sans',sans-serif] text-black">
      <div className="flex h-[29px] shrink-0 items-center bg-white pl-2 text-[12px]">
        <svg viewBox="0 0 16 16" className="-mt-px h-4 w-4">
          <circle cx="8" cy="8" r="7.700" fill="#1c5d9c" />
          <path d="M1 6l5-4 5 3 4-1M2 11l4-5 5-1 2 6-5 3-6-3M6 6l2 8M6 2v4l7 5" stroke="#a8d2f1" strokeWidth=".9" fill="none" />
          <g fill="#d5edff"><circle cx="6" cy="6" r="1.100" /><circle cx="11" cy="5" r="1.100" /><circle cx="8" cy="13" r="1.100" /><circle cx="4" cy="10" r="1" /><circle cx="12" cy="11" r="1" /></g>
        </svg>
        <Fit w={245} className="ml-[5px] pt-px">onera_m6 - Pointwise V18.3 R1 - [Customer ID:</Fit>
        <div className="ml-[2px] h-[15px] w-[35px] bg-[#c7c7c7]" />
        <span className="-ml-[1px] leading-none">]</span>
        <svg viewBox="0 0 102 12" className="mr-[18px] ml-auto h-3 w-[102px]" fill="none" stroke="#000">
          <path d="M1 6.500h10M45.500 .5h10v10h-10zM91.500 .5l10 10M101.500 .5l-10 10" />
        </svg>
      </div>
      <div className="flex h-[22px] shrink-0 items-center bg-white pt-[2px] pl-2 text-[12px]">
        {MENU.map(([a, u, b, w, g], i) => (
          <div key={i} className="shrink-0" style={{ marginRight: g }}>
            <Fit w={w}>{a}<span className="underline underline-offset-2">{u}</span>{b}</Fit>
          </div>
        ))}
      </div>
      <Toolbar />
      <div className="flex h-[926px] shrink-0">
        <Panel />
        <div className="ml-1 flex w-[863px] shrink-0 flex-col">
          <Scene />
          <Messages />
        </div>
        <SideBar />
      </div>
      <Status />
      <div className="flex h-[3px] shrink-0 overflow-hidden bg-[#1e1e1e] pl-4 font-['Liberation_Mono',monospace] text-[13px] leading-[8px] whitespace-pre text-[#b0b0b0]">
        <span>2. mesh</span>
        <span className="ml-[100px]">(in)</span>
        <span className="ml-[50px]">this controls how the  nodes  lie on a  connector.   The  connector   controls the  nodes   in a   domain   on   for</span>
      </div>
      <Notes />
    </div>
  );
}
